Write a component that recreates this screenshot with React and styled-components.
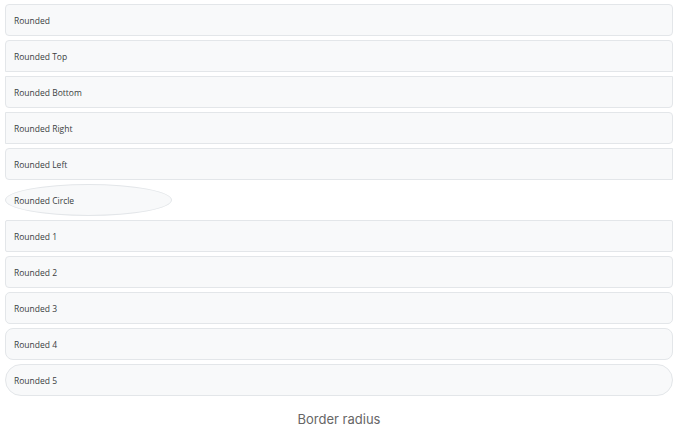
import React from 'react';
import styled, { createGlobalStyle } from 'styled-components';

const GlobalStyle = createGlobalStyle`
  html, body {
    margin: 0;
    padding: 0;
    background: #fff;
  }
`;

const RADII = {
  all: '4px',
  top: '4px 4px 0 0',
  bottom: '0 0 4px 4px',
  right: '0 4px 4px 0',
  left: '4px 0 0 4px',
  circle: '50%',
  r1: '2px',
  r2: '4px',
  r3: '5px',
  r4: '8px',
  r5: '16px',
};

const ITEMS = [
  { label: 'Rounded', radius: 'all' },
  { label: 'Rounded Top', radius: 'top' },
  { label: 'Rounded Bottom', radius: 'bottom' },
  { label: 'Rounded Right', radius: 'right' },
  { label: 'Rounded Left', radius: 'left' },
  { label: 'Rounded Circle', radius: 'circle', narrow: true },
  { label: 'Rounded 1', radius: 'r1' },
  { label: 'Rounded 2', radius: 'r2' },
  { label: 'Rounded 3', radius: 'r3' },
  { label: 'Rounded 4', radius: 'r4' },
  { label: 'Rounded 5', radius: 'r5' },
];

const Page = styled.main`
  width: 680px;
  height: 428px;
  display: flex;
  flex-direction: column;
  box-sizing: border-box;
  padding: 4px 7px 0 5px;
`;

const List = styled.div`
  display: flex;
  flex-direction: column;
  gap: 4px;
`;

const Box = styled.div`
  box-sizing: border-box;
  height: 32px;
  width: ${props => (props.$narrow ? '167px' : '100%')};
  display: flex;
  align-items: center;
  padding: 0 8px;
  background: #f8f9fa;
  border: 1px solid #e3e6e9;
  border-radius: ${props => RADII[props.$radius]};
  font-family: 'Open Sans', Lato, sans-serif;
  font-size: 8.5px;
  color: #3a3e42;
`;

const Caption = styled.p`
  margin: 15px 0 0;
  text-align: center;
  font-family: Inter, 'Noto Sans', sans-serif;
  font-size: 13px;
  color: #666;
`;

export default function App() {
  return (
    <Page>
      <GlobalStyle />
      <List>
        {ITEMS.map(item => (
          <Box key={item.label} $radius={item.radius} $narrow={item.narrow}>
            {item.label}
          </Box>
        ))}
      </List>
      <Caption>Border radius</Caption>
    </Page>
  );
}
